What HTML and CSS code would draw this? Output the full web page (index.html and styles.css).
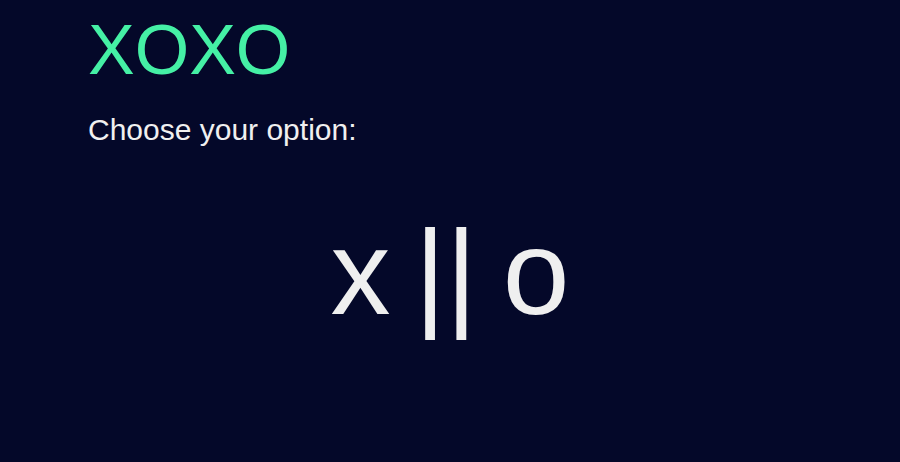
FILE: index.html
```html
<!DOCTYPE html>
<html>
<head>
<meta charset="utf-8">
<link rel="stylesheet" href="styles.css">
</head>
<body>
<main class="page">
  <h1 class="title">XOXO</h1>
  <p class="subtitle">Choose your option:</p>
  <div class="picker">
    <span class="opt opt-x">x</span>
    <span class="sep">||</span>
    <span class="opt opt-o">o</span>
  </div>
</main>
</body>
</html>
```
FILE: styles.css
```css
html, body {
  margin: 0;
  padding: 0;
  background: #040829;
  height: 100%;
}
body {
  font-family: "Liberation Sans", Arial, sans-serif;
  color: #f0f0f0;
}
.page {
  padding: 0 88px;
}
.title {
  margin: 0;
  padding-top: 10px;
  font-size: 70px;
  font-weight: normal;
  line-height: 80px;
  color: #45f0a5;
}
.subtitle {
  margin: 22px 0 0;
  font-size: 30px;
  line-height: 35px;
}
.picker {
  margin-top: 55px;
  display: flex;
  justify-content: center;
  align-items: baseline;
  font-size: 120px;
  line-height: 140px;
  color: #efefef;
}
.sep {
  margin: 0 26px 0 24px;
}
```
